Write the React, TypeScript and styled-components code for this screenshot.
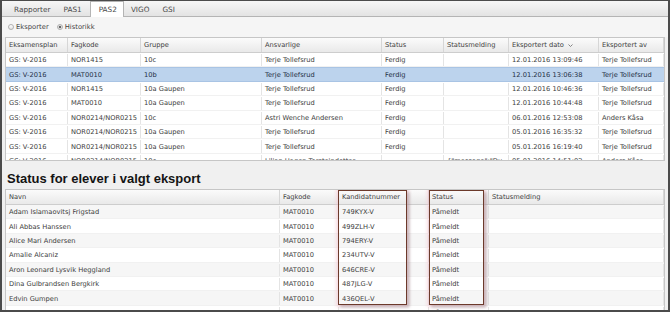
import styled, { createGlobalStyle } from 'styled-components';

const GlobalStyle = createGlobalStyle`
  html, body {
    margin: 0;
    padding: 0;
    background: #fff;
  }
  body {
    font-family: "DejaVu Sans", Verdana, sans-serif;
  }
`;

const UPPER_COLS = '62px 73px 121px 120px 62px 65px 90px 1fr';
const LOWER_COLS = '274px 59px 90px 60px 1fr';

const Frame = styled.div`
  width: 670px;
  height: 312px;
  box-sizing: border-box;
  border: 2px solid #4b4b4b;
  border-top-width: 1px;
  background: #f0f0f0;
  overflow: hidden;
  display: flex;
  flex-direction: column;
`;

const TabBar = styled.div`
  height: 16px;
  flex: none;
  box-sizing: border-box;
  display: flex;
  align-items: flex-end;
  padding-left: 7px;
  background: linear-gradient(#f6f6f6, #e3e3e3);
  border-bottom: 1px solid #b4b4b4;
`;

const Tab = styled.div<{ $active?: boolean }>`
  height: ${(p) => (p.$active ? '16px' : '14px')};
  margin-bottom: ${(p) => (p.$active ? '-1px' : '0')};
  box-sizing: border-box;
  display: flex;
  align-items: center;
  padding: ${(p) => (p.$active ? '0 6px 0 8px' : '0 5px')};
  margin-right: ${(p) => (p.$active ? '2px' : '3px')};
  font-size: 7.3px;
  color: #4a4a4a;
  background: ${(p) => (p.$active ? '#fff' : 'transparent')};
  border: ${(p) => (p.$active ? '1px solid #b4b4b4' : 'none')};
  border-bottom: none;
`;

const RadioRow = styled.div`
  height: 20px;
  flex: none;
  display: flex;
  align-items: center;
  padding-left: 6px;
  gap: 8px;
  background: #f5f5f5;
`;

const RadioLabel = styled.label`
  display: flex;
  align-items: center;
  gap: 2px;
  font-size: 6.8px;
  color: #444;
`;

const RadioDot = styled.span<{ $checked?: boolean }>`
  width: 6px;
  height: 6px;
  box-sizing: border-box;
  border-radius: 50%;
  border: 1px solid #b0b0b0;
  background: ${(p) =>
    p.$checked
      ? 'radial-gradient(circle, #666 0 1.3px, #e6e6e6 1.6px)'
      : 'linear-gradient(#fff, #e2e2e2)'};
`;

const Grid = styled.div<{ $height?: string }>`
  margin: 0 3px;
  box-sizing: border-box;
  border: 1px solid #c6c6c6;
  border-bottom-width: ${(p) => (p.$height ? '1px' : '0')};
  background: #fff;
  overflow: hidden;
  position: relative;
  flex: ${(p) => (p.$height ? 'none' : '1')};
  height: ${(p) => p.$height || 'auto'};
`;

const HeadRow = styled.div<{ $cols: string }>`
  display: grid;
  grid-template-columns: ${(p) => p.$cols};
  height: 14px;
  background: linear-gradient(#fbfbfb, #e9e9e9);
  border-bottom: 1px solid #cdcdcd;
`;

const HeadCell = styled.div`
  display: flex;
  align-items: center;
  gap: 4px;
  padding: 0 3px;
  font-size: 6.7px;
  color: #404040;
  border-right: 1px solid #d6d6d6;
  white-space: nowrap;
  overflow: hidden;
`;

const Row = styled.div<{ $cols: string; $selected?: boolean; $striped?: boolean }>`
  display: grid;
  grid-template-columns: ${(p) => p.$cols};
  height: 14.4px;
  box-sizing: border-box;
  background: ${(p) => (p.$selected ? '#bcd3ed' : p.$striped ? '#f6f6f6' : '#fff')};
  border-top: 1px solid ${(p) => (p.$selected ? '#a9c4e4' : 'transparent')};
  border-bottom: 1px solid ${(p) => (p.$selected ? '#a9c4e4' : '#f1f1f1')};
`;

const Cell = styled.div<{ $selected?: boolean }>`
  display: flex;
  align-items: center;
  padding: 0 3px;
  font-size: 6.7px;
  color: ${(p) => (p.$selected ? '#1f2f45' : '#3c3c3c')};
  border-right: 1px solid ${(p) => (p.$selected ? 'transparent' : '#e4e4e4')};
  white-space: nowrap;
  overflow: hidden;
`;

const SectionTitle = styled.h2`
  height: 28px;
  flex: none;
  box-sizing: border-box;
  margin: 0;
  padding: 11px 0 0 5px;
  font-family: "Liberation Sans", Arial, sans-serif;
  font-weight: bold;
  font-size: 13px;
  line-height: 13px;
  color: #141414;
`;

const Callout = styled.div<{ $left: number; $width: number }>`
  position: absolute;
  top: 0;
  left: ${(p) => p.$left}px;
  width: ${(p) => p.$width}px;
  height: 115px;
  box-sizing: border-box;
  border: 1.5px solid #6c3a2b;
  box-shadow: 0 0 3px 2px rgba(245, 196, 210, 0.55), 2px 2px 3px rgba(0, 0, 0, 0.35);
  pointer-events: none;
`;

const SortArrow = () => (
  <svg width="5" height="3" viewBox="0 0 5 3">
    <path d="M0.5 0.5 L2.5 2.5 L4.5 0.5" fill="none" stroke="#777" strokeWidth="0.9" />
  </svg>
);

const upperHead = [
  'Eksamensplan',
  'Fagkode',
  'Gruppe',
  'Ansvarlige',
  'Status',
  'Statusmelding',
  'Eksportert dato',
  'Eksportert av',
];

const exports = [
  ['GS: V-2016', 'NOR1415', '10c', 'Terje Tollefsrud', 'Ferdig', '', '12.01.2016 13:09:46', 'Terje Tollefsrud'],
  ['GS: V-2016', 'MAT0010', '10b', 'Terje Tollefsrud', 'Ferdig', '', '12.01.2016 13:06:38', 'Terje Tollefsrud'],
  ['GS: V-2016', 'NOR1415', '10a Gaupen', 'Terje Tollefsrud', 'Ferdig', '', '12.01.2016 10:46:36', 'Terje Tollefsrud'],
  ['GS: V-2016', 'MAT0010', '10a Gaupen', 'Terje Tollefsrud', 'Ferdig', '', '12.01.2016 10:44:48', 'Terje Tollefsrud'],
  ['GS: V-2016', 'NOR0214/NOR0215', '10c', 'Astri Wenche Andersen', 'Ferdig', '', '06.01.2016 12:53:08', 'Anders Kåsa'],
  ['GS: V-2016', 'NOR0214/NOR0215', '10a Gaupen', 'Terje Tollefsrud', 'Ferdig', '', '05.01.2016 16:35:32', 'Terje Tollefsrud'],
  ['GS: V-2016', 'NOR0214/NOR0215', '10a Gaupen', 'Terje Tollefsrud', 'Ferdig', '', '05.01.2016 16:19:40', 'Terje Tollefsrud'],
  ['GS: V-2016', 'NOR0214/NOR0215', '10c', 'Lilian Hagen Torsteindotter', '', '{"message":"Du', '05.01.2016 14:51:02', 'Anders Kåsa'],
];

const lowerHead = ['Navn', 'Fagkode', 'Kandidatnummer', 'Status', 'Statusmelding'];

const students = [
  ['Adam Islamaovitsj Frigstad', '749KYX-V'],
  ['Ali Abbas Hanssen', '499ZLH-V'],
  ['Alice Mari Andersen', '794ERY-V'],
  ['Amalie Alcaniz', '234UTV-V'],
  ['Aron Leonard Lysvik Heggland', '646CRE-V'],
  ['Dina Gulbrandsen Bergkirk', '487JLG-V'],
  ['Edvin Gumpen', '436QEL-V'],
  ['Even Lie Bogstad', '854HUJ-V'],
];

const App = () => {
  return (
    <>
      <GlobalStyle />
      <Frame>
        <TabBar>
          <Tab>Rapporter</Tab>
          <Tab>PAS1</Tab>
          <Tab $active>PAS2</Tab>
          <Tab>VIGO</Tab>
          <Tab>GSI</Tab>
        </TabBar>

        <RadioRow>
          <RadioLabel>
            <RadioDot />
            Eksporter
          </RadioLabel>
          <RadioLabel>
            <RadioDot $checked />
            Historikk
          </RadioLabel>
        </RadioRow>

        <Grid $height="124px">
          <HeadRow $cols={UPPER_COLS}>
            {upperHead.map((h) => (
              <HeadCell key={h}>
                {h}
                {h === 'Eksportert dato' && <SortArrow />}
              </HeadCell>
            ))}
          </HeadRow>
          {exports.map((row, i) => (
            <Row key={i} $cols={UPPER_COLS} $selected={i === 1}>
              {row.map((v, j) => (
                <Cell key={j} $selected={i === 1}>
                  {v}
                </Cell>
              ))}
            </Row>
          ))}
        </Grid>

        <SectionTitle>Status for elever i valgt eksport</SectionTitle>

        <Grid>
          <HeadRow $cols={LOWER_COLS}>
            {lowerHead.map((h) => (
              <HeadCell key={h}>{h}</HeadCell>
            ))}
          </HeadRow>
          {students.map(([name, nr], i) => (
            <Row key={nr} $cols={LOWER_COLS} $striped={i % 2 === 0}>
              <Cell>{name}</Cell>
              <Cell>MAT0010</Cell>
              <Cell>{nr}</Cell>
              <Cell>Påmeldt</Cell>
              <Cell />
            </Row>
          ))}
          <Callout $left={332} $width={69} />
          <Callout $left={423} $width={55} />
        </Grid>
      </Frame>
    </>
  );
};

export default App;
